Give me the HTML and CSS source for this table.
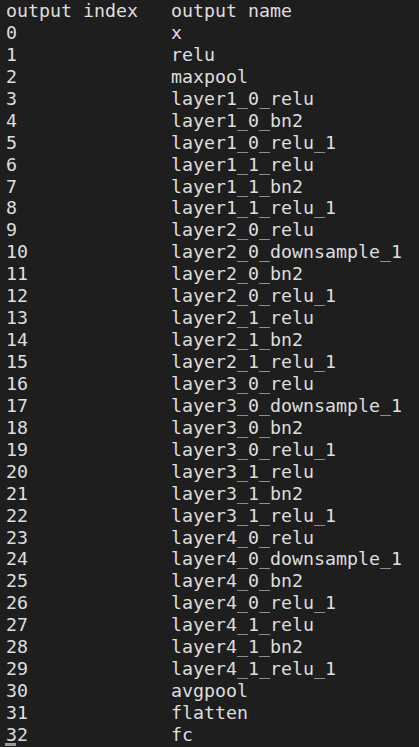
FILE: index.html
```html
<!DOCTYPE html>
<html lang="en">
<head>
    <meta charset="UTF-8">
    <meta name="viewport" content="width=device-width, initial-scale=1.0">
    <title>Output names</title>
    <link rel="stylesheet" href="styles.css">
</head>
<body>

    <div class="terminal">
        <!-- Header -->
        <div class="row">
            <span class="col-index">output index</span>
            <span class="col-name">output name</span>
        </div>

        <div class="row"><span class="col-index">0</span><span class="col-name">x</span></div>
        <div class="row"><span class="col-index">1</span><span class="col-name">relu</span></div>
        <div class="row"><span class="col-index">2</span><span class="col-name">maxpool</span></div>
        <div class="row"><span class="col-index">3</span><span class="col-name">layer1_0_relu</span></div>
        <div class="row"><span class="col-index">4</span><span class="col-name">layer1_0_bn2</span></div>
        <div class="row"><span class="col-index">5</span><span class="col-name">layer1_0_relu_1</span></div>
        <div class="row"><span class="col-index">6</span><span class="col-name">layer1_1_relu</span></div>
        <div class="row"><span class="col-index">7</span><span class="col-name">layer1_1_bn2</span></div>
        <div class="row"><span class="col-index">8</span><span class="col-name">layer1_1_relu_1</span></div>
        <div class="row"><span class="col-index">9</span><span class="col-name">layer2_0_relu</span></div>
        <div class="row"><span class="col-index">10</span><span class="col-name">layer2_0_downsample_1</span></div>
        <div class="row"><span class="col-index">11</span><span class="col-name">layer2_0_bn2</span></div>
        <div class="row"><span class="col-index">12</span><span class="col-name">layer2_0_relu_1</span></div>
        <div class="row"><span class="col-index">13</span><span class="col-name">layer2_1_relu</span></div>
        <div class="row"><span class="col-index">14</span><span class="col-name">layer2_1_bn2</span></div>
        <div class="row"><span class="col-index">15</span><span class="col-name">layer2_1_relu_1</span></div>
        <div class="row"><span class="col-index">16</span><span class="col-name">layer3_0_relu</span></div>
        <div class="row"><span class="col-index">17</span><span class="col-name">layer3_0_downsample_1</span></div>
        <div class="row"><span class="col-index">18</span><span class="col-name">layer3_0_bn2</span></div>
        <div class="row"><span class="col-index">19</span><span class="col-name">layer3_0_relu_1</span></div>
        <div class="row"><span class="col-index">20</span><span class="col-name">layer3_1_relu</span></div>
        <div class="row"><span class="col-index">21</span><span class="col-name">layer3_1_bn2</span></div>
        <div class="row"><span class="col-index">22</span><span class="col-name">layer3_1_relu_1</span></div>
        <div class="row"><span class="col-index">23</span><span class="col-name">layer4_0_relu</span></div>
        <div class="row"><span class="col-index">24</span><span class="col-name">layer4_0_downsample_1</span></div>
        <div class="row"><span class="col-index">25</span><span class="col-name">layer4_0_bn2</span></div>
        <div class="row"><span class="col-index">26</span><span class="col-name">layer4_0_relu_1</span></div>
        <div class="row"><span class="col-index">27</span><span class="col-name">layer4_1_relu</span></div>
        <div class="row"><span class="col-index">28</span><span class="col-name">layer4_1_bn2</span></div>
        <div class="row"><span class="col-index">29</span><span class="col-name">layer4_1_relu_1</span></div>
        <div class="row"><span class="col-index">30</span><span class="col-name">avgpool</span></div>
        <div class="row"><span class="col-index">31</span><span class="col-name">flatten</span></div>
        <div class="row"><span class="col-index">32</span><span class="col-name">fc</span></div>

        <!-- Cursor -->
        <div class="cursor"></div>
    </div>

</body>
</html>
```

FILE: styles.css
```css
html, body {
    margin: 0;
    height: 100%;
    background-color: #1e1e1e;
}
body {
    overflow: hidden;
}
.terminal {
    padding: 0 0 0 6px;
    font-family: "DejaVu Sans Mono", "Liberation Mono", monospace;
    font-size: 18.27px;
    line-height: 21.94px;
    color: #dedede;
}
.row {
    display: grid;
    grid-template-columns: 165px 1fr;
    white-space: pre;
}
.cursor {
    width: 11px;
    height: 3px;
    margin-top: -3px;
    margin-left: -1px;
    background: #9a9a9a;
}
```
